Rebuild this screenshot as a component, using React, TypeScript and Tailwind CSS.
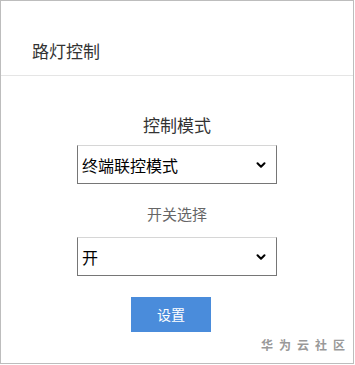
import {ChevronDown} from "lucide-react";

const font = {fontFamily: '"Noto Sans CJK SC", "Noto Sans", sans-serif'};

const SelectBox = ({value}: {value: string}) => (
    <div className="w-[200px] h-[39px] border border-[#767676] border-t-[#d6d6d6] flex items-center justify-between pl-[4px] pr-[8px] bg-white">
        <span className="text-[16px] text-black leading-none">{value}</span>
        <ChevronDown size={14} strokeWidth={3.5} className="text-black"/>
    </div>
);

const App = () => {
    return (
        <div className="w-[355px] h-[365px] bg-white" style={font}>
            <div className="w-[354px] h-[364px] border border-[#bdbdbd] flex flex-col">
                <div className="h-[75px] border-b border-[#e5e5e5] flex items-end pb-[12px] pl-[31px]">
                    <span className="text-[17px] text-[#333]">路灯控制</span>
                </div>
                <div className="flex flex-col items-center pt-[40px]">
                    <div className="text-[17px] text-[#333] leading-none">控制模式</div>
                    <div className="mt-[12px]">
                        <SelectBox value="终端联控模式"/>
                    </div>
                    <div className="mt-[22px] text-[15px] text-[#666] leading-none">开关选择</div>
                    <div className="mt-[16px]">
                        <SelectBox value="开"/>
                    </div>
                    <button className="mt-[21px] mr-[12px] w-[80px] h-[35px] bg-[#4a8cdb] text-white text-[14px]">
                        设置
                    </button>
                </div>
                <div className="flex justify-end pr-[2px] mt-[4px]">
                    <span className="text-[12px] text-[#999] font-bold tracking-[6px]">华为云社区</span>
                </div>
            </div>
        </div>
    );
};

export default App;
